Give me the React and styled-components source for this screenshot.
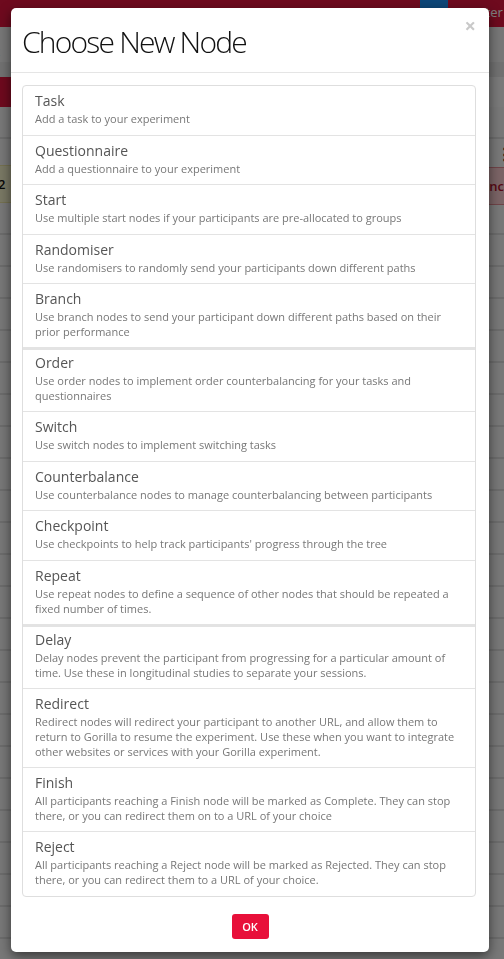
import React from 'react';
import styled, {createGlobalStyle} from 'styled-components';

const GlobalStyle = createGlobalStyle`
  html, body {
    margin: 0;
    padding: 0;
    overflow: hidden;
  }
  body {
    font-family: "Open Sans", "Liberation Sans", sans-serif;
  }
`;

const NODES = [
    {title: 'Task', text: 'Add a task to your experiment'},
    {title: 'Questionnaire', text: 'Add a questionnaire to your experiment'},
    {title: 'Start', text: 'Use multiple start nodes if your participants are pre-allocated to groups'},
    {title: 'Randomiser', text: 'Use randomisers to randomly send your participants down different paths'},
    {title: 'Branch', text: 'Use branch nodes to send your participant down different paths based on their prior performance'},
    {title: 'Order', text: 'Use order nodes to implement order counterbalancing for your tasks and questionnaires', thick: true},
    {title: 'Switch', text: 'Use switch nodes to implement switching tasks'},
    {title: 'Counterbalance', text: 'Use counterbalance nodes to manage counterbalancing between participants'},
    {title: 'Checkpoint', text: 'Use checkpoints to help track participants\' progress through the tree'},
    {title: 'Repeat', text: 'Use repeat nodes to define a sequence of other nodes that should be repeated a fixed number of times.'},
    {title: 'Delay', text: 'Delay nodes prevent the participant from progressing for a particular amount of time. Use these in longitudinal studies to separate your sessions.', thick: true},
    {title: 'Redirect', text: 'Redirect nodes will redirect your participant to another URL, and allow them to return to Gorilla to resume the experiment. Use these when you want to integrate other websites or services with your Gorilla experiment.'},
    {title: 'Finish', text: 'All participants reaching a Finish node will be marked as Complete. They can stop there, or you can redirect them on to a URL of your choice'},
    {title: 'Reject', text: 'All participants reaching a Reject node will be marked as Rejected. They can stop there, or you can redirect them to a URL of your choice.'},
];

/* ---------- page behind the modal ---------- */

const Page = styled.div`
  position: relative;
  width: 504px;
  height: 959px;
  overflow: hidden;
  background-color: #f2f2f2;
  display: flex;
  flex-direction: column;
`;

const NavBar = styled.div`
  height: 27px;
  background: #dc143c;
  display: flex;
  align-items: flex-start;
  gap: 7px;
  padding-left: 420px;
  color: #fff;
  font-size: 13px;
`;

const NavButton = styled.div`
  flex: none;
  width: 28px;
  height: 22px;
  background: #1a8cf0;
  border-radius: 0 0 2px 2px;
`;

const NavLink = styled.div`
  line-height: 24px;
  white-space: nowrap;
`;

const Toolbar = styled.div`
  height: 35px;
  background: #eeeeee;
  display: flex;
  align-items: flex-end;
  font-size: 13px;
  color: #111;
  padding-bottom: 2px;
  box-sizing: border-box;
`;

const ToolLabel = styled.div`
  margin-left: -22px;
`;

const SubBar = styled.div`
  height: 15px;
  background: #e2e2e2;
`;

const TabRow = styled.div`
  height: 30px;
  display: flex;
  background: #f4f4f4;
`;

const ActiveTab = styled.div`
  width: 140px;
  background: #dc143c;
`;

const Canvas = styled.div`
  position: relative;
  flex: 1;
  background-color: #f0f0f0;
  background-image: repeating-linear-gradient(
    to bottom,
    transparent 0,
    transparent 30px,
    #d8d8d8 30px,
    #d8d8d8 32px
  );
`;

const CanvasNode = styled.div`
  position: absolute;
  top: ${p => p.$top}px;
  left: ${p => p.$left}px;
  height: 36px;
  padding: 0 8px;
  display: flex;
  align-items: center;
  font-size: 13px;
  font-weight: 600;
  white-space: nowrap;
  background: ${p => p.$bg};
  color: ${p => p.$color};
  border: 1px solid ${p => p.$border};
  border-radius: 2px;
`;

const Handle = styled.div`
  position: absolute;
  top: 36px;
  left: 497px;
  font-size: 15px;
  font-weight: bold;
  color: #111;
`;

const Backdrop = styled.div`
  position: fixed;
  inset: 0;
  background: rgba(0, 0, 0, 0.5);
`;

/* ---------- modal ---------- */

const Modal = styled.div`
  position: absolute;
  top: 8px;
  left: 11px;
  width: 478px;
  background: #fff;
  border-radius: 5px;
  box-shadow: 0 4px 12px rgba(0, 0, 0, 0.55);
  display: flex;
  flex-direction: column;
`;

const Header = styled.div`
  height: 65px;
  box-sizing: border-box;
  border-bottom: 1px solid #e5e5e5;
  display: flex;
  align-items: center;
  justify-content: space-between;
  padding: 0 13px 0 11px;
`;

const Title = styled.h3`
  margin: 0;
  font-size: 30px;
  font-weight: 300;
  color: #111;
  letter-spacing: -1.8px;
  padding-top: 2px;
`;

const Close = styled.span`
  align-self: flex-start;
  margin-top: 8px;
  font-size: 20px;
  font-weight: bold;
  color: #c9c9c9;
  line-height: 1;
  cursor: pointer;
`;

const Body = styled.div`
  padding: 12px 13px 0 11px;
`;

const NodeList = styled.div`
  display: flex;
  flex-direction: column;
  border: 1px solid #dedede;
  border-radius: 4px;
`;

const NodeItem = styled.div`
  padding: 6px 12px 7.8px;
  border-top: 1px solid #e3e3e3;
  box-shadow: ${p => (p.$thick ? 'inset 0 2px 0 #e3e3e3' : 'none')};
  cursor: pointer;

  &:first-child {
    border-top: none;
  }
`;

const NodeTitle = styled.div`
  font-size: 14px;
  line-height: 17px;
  color: #555;
  margin-bottom: 3px;
`;

const NodeText = styled.div`
  font-size: 11px;
  line-height: 14.7px;
  color: #777;
`;

const Footer = styled.div`
  display: flex;
  justify-content: center;
  padding: 17px 0 13px;
`;

const OkButton = styled.button`
  width: 37px;
  height: 25px;
  padding: 0;
  border: none;
  border-radius: 3px;
  background: #e8103a;
  color: #fff;
  font-family: "Open Sans", "Liberation Sans", sans-serif;
  font-size: 11px;
  font-weight: 600;
  cursor: pointer;
`;

const App = () => {
    return (
        <>
            <GlobalStyle/>
            <Page>
                <NavBar>
                    <NavButton/>
                    <NavLink>&#9638; Enter a</NavLink>
                </NavBar>
                <Toolbar>
                    <ToolLabel>Exit</ToolLabel>
                </Toolbar>
                <SubBar/>
                <TabRow>
                    <ActiveTab/>
                </TabRow>
                <Canvas>
                    <CanvasNode $top={58} $left={-48} $bg="#f3f0c8" $color="#111" $border="#e8e0a0">
                        Node 2
                    </CanvasNode>
                    <CanvasNode $top={60} $left={453} $bg="#f6c8cc" $color="#b0102a" $border="#e08890">
                        Balance
                    </CanvasNode>
                    <Handle>&#8942;</Handle>
                </Canvas>
                <Backdrop/>
                <Modal>
                    <Header>
                        <Title>Choose New Node</Title>
                        <Close>&times;</Close>
                    </Header>
                    <Body>
                        <NodeList>
                            {NODES.map(node => (
                                <NodeItem key={node.title} $thick={node.thick}>
                                    <NodeTitle>{node.title}</NodeTitle>
                                    <NodeText>{node.text}</NodeText>
                                </NodeItem>
                            ))}
                        </NodeList>
                    </Body>
                    <Footer>
                        <OkButton>OK</OkButton>
                    </Footer>
                </Modal>
            </Page>
        </>
    );
};

export default App;
